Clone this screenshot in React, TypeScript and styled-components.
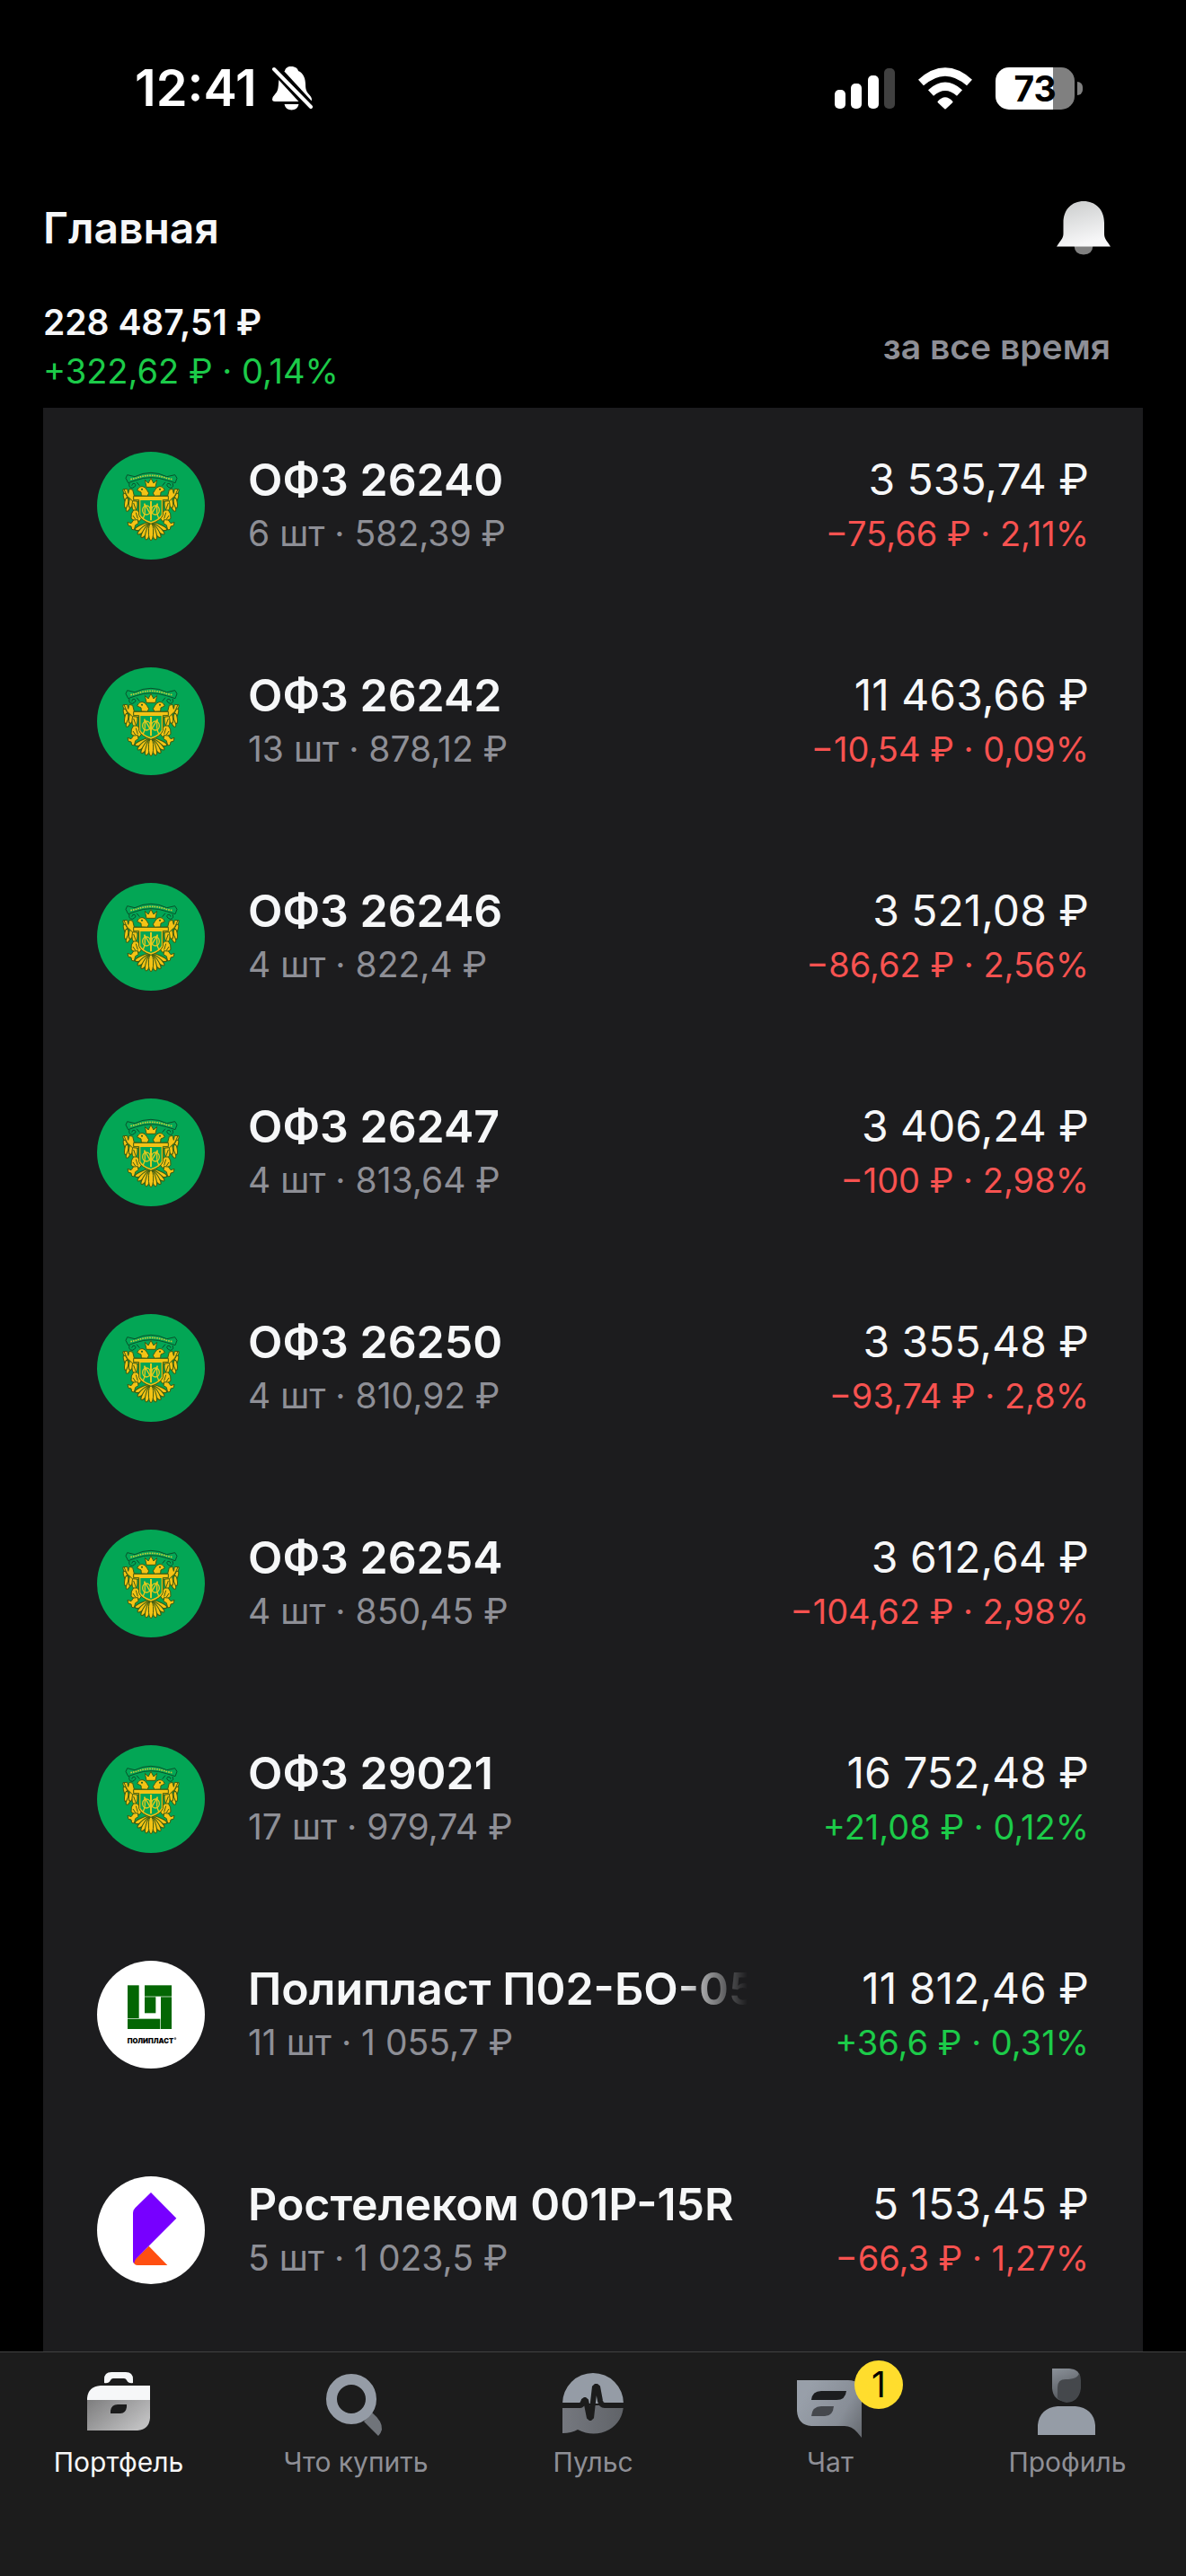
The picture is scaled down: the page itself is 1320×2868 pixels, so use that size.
import React from "react";
import styled, { createGlobalStyle } from "styled-components";

const color = {
  page: "#000000",
  card: "#1c1c1e",
  nav: "#1c1c1c",
  line: "#414142",
  text: "#f6f7f8",
  grey: "#8e8f96",
  up: "#1ccb49",
  down: "#f75250",
  badge: "#ffdd2d",
};

const GlobalStyle = createGlobalStyle`
  * { box-sizing: border-box; }
  body {
    margin: 0;
    background: ${color.page};
    color: ${color.text};
    font-family: Inter, "Liberation Sans", sans-serif;
  }
  svg { display: block; flex: none; }
`;

const Screen = styled.div`
  display: flex;
  flex-direction: column;
  min-height: 100vh;
`;

const StatusBar = styled.div`
  display: flex;
  align-items: center;
  justify-content: space-between;
  height: 196px;
  padding: 0 115px 0 150px;
  color: #ffffff;
`;

const StatusGroup = styled.div<{ $gap: number }>`
  display: flex;
  align-items: center;
  gap: ${(p) => p.$gap}px;
`;

const Clock = styled.time`
  font-size: 56px;
  line-height: 60px;
  font-weight: 600;
`;

const Battery = styled.div`
  display: flex;
  align-items: center;
  gap: 3px;
`;

const BatteryBody = styled.div`
  width: 88px;
  height: 47px;
  border-radius: 15px;
  background: linear-gradient(to right, #ffffff 73%, #808080 73%);
  color: #000000;
  font-size: 39px;
  line-height: 47px;
  font-weight: 700;
  text-align: center;
`;

const BatteryTip = styled.div`
  width: 6px;
  height: 15px;
  border-radius: 0 6px 6px 0;
  background: #808080;
`;

const Header = styled.header`
  display: flex;
  flex-direction: column;
  gap: 48px;
  padding: 28px 84px 14px 48px;
`;

const HeaderRow = styled.div`
  display: flex;
  align-items: center;
  justify-content: space-between;
`;

const PageTitle = styled.h1`
  margin: 0;
  font-size: 48px;
  line-height: 60px;
  font-weight: 600;
`;

const PlainButton = styled.button`
  border: 0;
  padding: 0;
  background: none;
  color: ${color.grey};
  font: inherit;
  font-size: 39px;
  line-height: 54px;
  font-weight: 600;
  cursor: pointer;
`;

const Total = styled.div`
  font-size: 39px;
  line-height: 54px;
  font-weight: 600;
`;

const Change = styled.div<{ $up: boolean }>`
  font-size: 38px;
  line-height: 54px;
  color: ${(p) => (p.$up ? color.up : color.down)};
  white-space: nowrap;
`;

const Holdings = styled.ul`
  flex: 1;
  display: flex;
  flex-direction: column;
  gap: 120px;
  margin: 0 48px;
  padding: 49px 60px 75px;
  list-style: none;
  background: ${color.card};
`;

const Holding = styled.li`
  display: grid;
  grid-template-columns: 120px minmax(0, 1fr) minmax(332px, auto);
  gap: 48px;
  height: 120px;
`;

const Cell = styled.div<{ $end?: boolean }>`
  min-width: 0;
  text-align: ${(p) => (p.$end ? "right" : "left")};
`;

const Name = styled.div<{ $fade?: boolean }>`
  overflow: hidden;
  white-space: nowrap;
  font-size: 50px;
  line-height: 62px;
  font-weight: 600;
  mask-image: ${(p) =>
    p.$fade ? "linear-gradient(to left, transparent, #000000 80px)" : "none"};
`;

const Value = styled.div`
  font-size: 48px;
  line-height: 62px;
  white-space: nowrap;
`;

const Details = styled.div`
  font-size: 39px;
  line-height: 58px;
  color: ${color.grey};
  white-space: nowrap;
`;

const Delta = styled(Change)`
  line-height: 58px;
`;

const TabBar = styled.nav`
  display: grid;
  grid-template-columns: repeat(5, 1fr);
  height: 250px;
  padding-top: 11px;
  border-top: 1px solid ${color.line};
  background: ${color.nav};
`;

const Tab = styled.a<{ $active?: boolean }>`
  display: flex;
  flex-direction: column;
  align-items: center;
  gap: 8px;
  color: ${(p) => (p.$active ? color.text : color.grey)};
  font-size: 30px;
  line-height: 38px;
  text-decoration: none;
`;

const TabIcon = styled.span`
  position: relative;
  display: block;
`;

const Badge = styled.span`
  position: absolute;
  top: -2px;
  left: 75px;
  width: 54px;
  height: 54px;
  border-radius: 50%;
  background: ${color.badge};
  color: #000000;
  font-size: 39px;
  line-height: 54px;
  text-align: center;
`;

const SilentBell = () => (
  <svg width="46" height="50" viewBox="0 0 46 50" aria-hidden="true">
    <path
      fill="#ffffff"
      d="M22 1C27 1 29.500 3.500 30 6C36 8.500 38 15 38 21C38 28 40 30 43.500 34Q45 36 45 38Q45 40 43 40H4Q1 40 1 37.500Q1 35 4 32C7 28.500 7.500 27 8 20C8.500 12 11 8 15 6C15.500 3 18 1 22 1ZM14.500 43H30.500Q29 49.500 22.500 49.500Q16 49.500 14.500 43Z"
    />
    <path stroke="#000000" strokeWidth="11" d="M1 0L48 51" />
    <path stroke="#ffffff" strokeWidth="4" strokeLinecap="round" d="M3 4L44 46" />
  </svg>
);

const Signal = () => (
  <svg width="67" height="46" viewBox="0 0 67 46" aria-hidden="true">
    <g fill="#ffffff">
      <rect x="0" y="25" width="12" height="21" rx="5" />
      <rect x="18" y="18" width="12" height="28" rx="5" />
      <rect x="37" y="9" width="12" height="37" rx="5" />
      <rect x="55" y="1" width="12" height="45" rx="5" fill="#404040" />
    </g>
  </svg>
);

const Wifi = () => (
  <svg width="62" height="47" viewBox="0 0 62 47" fill="none" aria-hidden="true">
    <g stroke="#ffffff" strokeWidth="9">
      <path d="M4 17Q31 -7 58 17" />
      <path d="M15 28.500Q31 14 47 28.500" />
    </g>
    <path
      fill="#ffffff"
      stroke="#ffffff"
      strokeWidth="2"
      strokeLinejoin="round"
      d="M23.500 38.500Q31 30 38.500 38.500L31 45.500Z"
    />
  </svg>
);

const Bell = () => (
  <svg width="60" height="60" viewBox="0 0 60 60" aria-hidden="true">
    <defs>
      <linearGradient id="bell" x1="0" y1="0" x2="0.3" y2="1">
        <stop offset="0" stopColor="#c9cbcb" />
        <stop offset="1" stopColor="#f7f7f8" />
      </linearGradient>
    </defs>
    <path fill="#808080" d="M19.500 49H40.500Q40 59.500 30 59.500Q20 59.500 19.500 49Z" />
    <path
      fill="url(#bell)"
      d="M30 0C43 0 53 9 53 24V36C53 41 55 43 57 46L60 50.500H0L3 46C5 43 7.500 41 7.500 36V24C7.500 9 17 0 30 0Z"
    />
  </svg>
);

const feathers: [number, number, number, number, number][] = [
  [152, 208, 6, 17, -36],
  [150, 224, 6, 17, -20],
  [152, 240, 6, 17, 8],
  [160, 252, 6, 17, 24],
  [168, 236, 7, 20, 10],
  [180, 246, 9, 20, 2],
];

const Wing = () => (
  <g>
    {feathers.map(([x, y, rx, ry, angle]) => (
      <ellipse key={`${x}-${y}`} cx={x} cy={y} rx={rx} ry={ry} transform={`rotate(${angle} ${x} ${y})`} />
    ))}
    <path d="M144 194L155 193L158 208L162 193L173 196L178 216L200 217L194 235L172 233L154 216Z" />
    <path d="M176 264Q188 260 196 272L203 290L197 300L182 301L168 292L169 276Z" />
    <path d="M156 304L168 308L176 297L190 296L192 308L182 314L178 330L170 328L168 318L159 316Z" />
    <path d="M188 198Q194 183 207 185Q216 187 220 196L227 207L222 217L202 216L201 204Z" />
    <circle cx="204" cy="194" r="3" fill="#145b22" stroke="none" />
    <path d="M176 240L184 262M184 272L190 292M174 282L182 294" fill="none" />
  </g>
);

const tail = [-68, 68, -51, 51, -34, 34, -17, 17, 0];

const TreasuryLogo = () => (
  <svg width="120" height="120" viewBox="54 69 360 360" aria-hidden="true">
    <circle cx="234" cy="249" r="180" fill="#03a655" />
    <g fill="none" stroke="#08512b" strokeWidth="3">
      <path d="M155 146L180 152Q234 126 287 152L314 146L321 157L315 173L286 164Q234 146 184 164L158 173L150 157Z" />
      <path d="M162 174Q158 189 172 190Q188 183 180 175Q172 172 170 182M306 174Q312 189 298 190Q282 183 290 175Q298 172 300 182M186 170L196 182M282 170L272 182" />
    </g>
    <path d="M166 161L184 157Q234 139 286 157L305 161" fill="none" stroke="#c8ca37" strokeWidth="5" strokeDasharray="5 3" />
    <g fill="#f4c315" stroke="#3c5c13" strokeWidth="3">
      {tail.map((angle) => (
        <ellipse key={angle} cx="234" cy="336" rx="8" ry="29" transform={`rotate(${angle} 234 308)`} />
      ))}
      <Wing />
      <g transform="matrix(-1 0 0 1 468 0)">
        <Wing />
      </g>
      <path d="M214 163L225 174L234 157L243 174L254 163L249 187H219Z" />
      <path d="M176 217H292V230H274V281Q266 299 234 310Q202 299 194 281V230H176Z" />
    </g>
    <path fill="#03a655" d="M199 231H269V279Q261 294 234 303Q207 294 199 279Z" />
    <g fill="none" stroke="#e7c91d" strokeWidth="4">
      <path d="M208 291Q218 272 212 242L234 280L256 242Q250 272 260 291" />
      <path d="M234 234V298" strokeWidth="6" />
      <ellipse cx="219" cy="264" rx="13" ry="15" />
      <ellipse cx="249" cy="264" rx="13" ry="15" />
    </g>
  </svg>
);

const PolyplastLogo = () => (
  <svg width="120" height="120" viewBox="54 69 360 360" aria-hidden="true">
    <circle cx="234" cy="249" r="180" fill="#ffffff" />
    <g fill="#046604">
      <rect x="156" y="151" width="38" height="110" />
      <rect x="156" y="263" width="109" height="34" />
      <rect x="267" y="190" width="36" height="107" />
      <rect x="213" y="151" width="90" height="37" />
      <rect x="213" y="190" width="37" height="54" />
    </g>
    <text x="155" y="345" fill="#000000" fontFamily="Inter, sans-serif" fontSize="23" fontWeight="900">
      ПОЛИПЛАСТ
    </text>
    <circle cx="315" cy="329" r="4" fill="#777777" />
  </svg>
);

const RostelecomLogo = () => (
  <svg width="120" height="120" viewBox="54 69 360 360" aria-hidden="true">
    <circle cx="234" cy="249" r="180" fill="#ffffff" />
    <path fill="#ff4f12" d="M227 302L289 366H190Q176 366 175 352Z" />
    <path fill="#7700ff" d="M234 123L319 209L186 343Q178 351 178 360Q174 357 174 350V192Q174 182 181 175Z" />
  </svg>
);

const PortfolioIcon = () => (
  <svg width="96" height="84" viewBox="0 0 96 84" aria-hidden="true">
    <defs>
      <linearGradient id="case" x1="0" y1="0" x2="1" y2="0.6">
        <stop offset="0" stopColor="#7d7d7e" />
        <stop offset="1" stopColor="#bfbfc0" />
      </linearGradient>
    </defs>
    <path fill="#f6f7f8" d="M32 23V19Q32 11 40 11H56Q64 11 64 19V23Q59 24 57 20Q56 18 54 18H42Q40 18 39 20Q37 24 32 23Z" />
    <path fill="#f6f7f8" d="M13 42V40Q14 27 28 26H83V42Z" />
    <path
      fill="url(#case)"
      fillRule="evenodd"
      d="M13 42H83V62Q82 75 69 76H13ZM39 57V54Q40 47 47 47H57V50Q56 57 50 57Z"
    />
  </svg>
);

const SearchIcon = () => (
  <svg width="96" height="84" viewBox="0 0 96 84" aria-hidden="true">
    <path fill="#70747a" d="M57 66L66 56Q78 66 77 75Q76 79 73 82Z" />
    <circle cx="43" cy="41" r="22" fill="none" stroke="#959ca6" strokeWidth="12" />
  </svg>
);

const PulseIcon = () => (
  <svg width="96" height="84" viewBox="0 0 96 84" aria-hidden="true">
    <defs>
      <linearGradient id="pulse" x1="0" y1="0" x2="1" y2="0">
        <stop offset="0" stopColor="#75787f" />
        <stop offset="1" stopColor="#606368" />
      </linearGradient>
    </defs>
    <path fill="#959ca6" d="M14 46A34 34 0 0 1 82 46Z" />
    <path fill="url(#pulse)" d="M14 48H82Q81 66 66 75Q49 84 31 75Q24 79 14 79Z" />
    <path
      fill="none"
      stroke="#1c1c1c"
      strokeWidth="6"
      strokeLinejoin="bevel"
      d="M12 48H34Q36 48 38 42L40 42L44 62L46 62L50 27L53 27L56 43Q57 48 61 48H84"
    />
  </svg>
);

const ChatIcon = () => (
  <svg width="96" height="84" viewBox="0 0 96 84" aria-hidden="true">
    <defs>
      <linearGradient id="chat" x1="0" y1="0.500" x2="1" y2="1">
        <stop offset="0" stopColor="#989fa9" />
        <stop offset="0.600" stopColor="#888e97" />
        <stop offset="1" stopColor="#65696f" />
      </linearGradient>
    </defs>
    <path fill="url(#chat)" d="M11 20H68Q83 20 83 34V84L78 78Q72 71 64 71H27Q12 70 11 54Z" />
    <path fill="#1c1d1f" d="M27 42Q28 32 38 32H66Q65 42 55 42Z" />
    <path fill="#45484d" d="M27 60Q28 49 38 49H52Q51 60 42 60Z" />
  </svg>
);

const ProfileIcon = () => (
  <svg width="96" height="84" viewBox="0 0 96 84" aria-hidden="true">
    <defs>
      <linearGradient id="hair" x1="0" y1="0" x2="0.300" y2="1">
        <stop offset="0" stopColor="#8b9199" />
        <stop offset="1" stopColor="#54585d" />
      </linearGradient>
    </defs>
    <path fill="url(#hair)" d="M31 7H50Q62 8 62 18V29Q61 44 47 44Q32 43 31 29Z" />
    <path fill="#45484c" d="M37 40V28Q37 19 46 19Q60 19 61 12Q63 16 63 20V29Q61 44 47 45Q41 44 37 40Z" />
    <path fill="#959ca6" d="M15 81V70Q17 51 37 49H57Q77 51 79 70V81Z" />
  </svg>
);

type Item = {
  logo: () => React.ReactElement;
  name: string;
  details: string;
  value: string;
  delta: string;
  up?: boolean;
  fade?: boolean;
};

const items: Item[] = [
  { logo: TreasuryLogo, name: "ОФЗ 26240", details: "6 шт · 582,39 ₽", value: "3 535,74 ₽", delta: "−75,66 ₽ · 2,11%" },
  { logo: TreasuryLogo, name: "ОФЗ 26242", details: "13 шт · 878,12 ₽", value: "11 463,66 ₽", delta: "−10,54 ₽ · 0,09%" },
  { logo: TreasuryLogo, name: "ОФЗ 26246", details: "4 шт · 822,4 ₽", value: "3 521,08 ₽", delta: "−86,62 ₽ · 2,56%" },
  { logo: TreasuryLogo, name: "ОФЗ 26247", details: "4 шт · 813,64 ₽", value: "3 406,24 ₽", delta: "−100 ₽ · 2,98%" },
  { logo: TreasuryLogo, name: "ОФЗ 26250", details: "4 шт · 810,92 ₽", value: "3 355,48 ₽", delta: "−93,74 ₽ · 2,8%" },
  { logo: TreasuryLogo, name: "ОФЗ 26254", details: "4 шт · 850,45 ₽", value: "3 612,64 ₽", delta: "−104,62 ₽ · 2,98%" },
  { logo: TreasuryLogo, name: "ОФЗ 29021", details: "17 шт · 979,74 ₽", value: "16 752,48 ₽", delta: "+21,08 ₽ · 0,12%", up: true },
  { logo: PolyplastLogo, name: "Полипласт П02-БО-05", details: "11 шт · 1 055,7 ₽", value: "11 812,46 ₽", delta: "+36,6 ₽ · 0,31%", up: true, fade: true },
  { logo: RostelecomLogo, name: "Ростелеком 001P-15R", details: "5 шт · 1 023,5 ₽", value: "5 153,45 ₽", delta: "−66,3 ₽ · 1,27%" },
];

const tabs = [
  { label: "Портфель", icon: PortfolioIcon, active: true },
  { label: "Что купить", icon: SearchIcon },
  { label: "Пульс", icon: PulseIcon },
  { label: "Чат", icon: ChatIcon, badge: 1 },
  { label: "Профиль", icon: ProfileIcon },
];

export default function App() {
  return (
    <Screen>
      <GlobalStyle />
      <StatusBar>
        <StatusGroup $gap={16}>
          <Clock>12:41</Clock>
          <SilentBell />
        </StatusGroup>
        <StatusGroup $gap={25}>
          <Signal />
          <Wifi />
          <Battery>
            <BatteryBody>73</BatteryBody>
            <BatteryTip />
          </Battery>
        </StatusGroup>
      </StatusBar>
      <Header>
        <HeaderRow>
          <PageTitle>Главная</PageTitle>
          <PlainButton type="button" aria-label="Уведомления">
            <Bell />
          </PlainButton>
        </HeaderRow>
        <HeaderRow>
          <div>
            <Total>228 487,51 ₽</Total>
            <Change $up>+322,62 ₽ · 0,14%</Change>
          </div>
          <PlainButton type="button">за все время</PlainButton>
        </HeaderRow>
      </Header>
      <Holdings>
        {items.map(({ logo: Logo, ...item }) => (
          <Holding key={item.name}>
            <Logo />
            <Cell>
              <Name $fade={item.fade}>{item.name}</Name>
              <Details>{item.details}</Details>
            </Cell>
            <Cell $end>
              <Value>{item.value}</Value>
              <Delta $up={Boolean(item.up)}>{item.delta}</Delta>
            </Cell>
          </Holding>
        ))}
      </Holdings>
      <TabBar>
        {tabs.map(({ label, icon: Icon, active, badge }) => (
          <Tab key={label} href="#" $active={active} aria-current={active ? "page" : undefined}>
            <TabIcon>
              <Icon />
              {badge && <Badge>{badge}</Badge>}
            </TabIcon>
            {label}
          </Tab>
        ))}
      </TabBar>
    </Screen>
  );
}
